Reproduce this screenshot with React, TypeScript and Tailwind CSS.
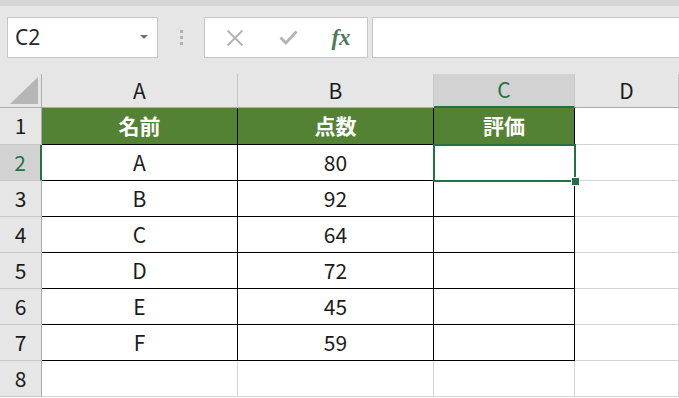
import React from "react";

const cols = ["A", "B", "C", "D"];
const data: string[][] = [
  ["名前", "点数", "評価"],
  ["A", "80", ""],
  ["B", "92", ""],
  ["C", "64", ""],
  ["D", "72", ""],
  ["E", "45", ""],
  ["F", "59", ""],
];

const font = { fontFamily: '"Noto Sans CJK JP", "Noto Sans", sans-serif' };

export default function App() {
  const rows = [1, 2, 3, 4, 5, 6, 7, 8];
  return (
    <div className="w-[679px] h-[398px] overflow-hidden bg-white relative" style={font}>
      {/* top band */}
      <div className="h-[6px] bg-[#d6d6d6]" />
      {/* formula bar */}
      <div className="h-[68px] bg-[#e6e6e6] flex items-start pt-[11px] pl-[7px]">
        <div className="w-[151px] h-[41px] bg-white border border-[#c6c6c6] flex items-center justify-between pl-[7px] pr-[9px]">
          <span className="text-[21px] text-[#1f2a36] leading-none" style={{ fontFamily: '"Noto Sans", sans-serif' }}>C2</span>
          <svg width="8" height="5" viewBox="0 0 8 5">
            <polygon points="0,0 8,0 4,4" fill="#707070" />
          </svg>
        </div>
        <div className="w-[46px] h-[41px] flex flex-col items-center justify-center gap-[3px]">
          <div className="w-[3px] h-[3px] bg-[#b2b2b2]" />
          <div className="w-[3px] h-[3px] bg-[#b2b2b2]" />
          <div className="w-[3px] h-[3px] bg-[#b2b2b2]" />
        </div>
        <div className="w-[164px] h-[41px] bg-white border border-[#c6c6c6] flex items-center">
          <div className="w-[56px] flex justify-center pl-[4px]">
            <svg width="18" height="18" viewBox="0 0 18 18">
              <path d="M1.5 1.5 L16.5 16.5 M16.5 1.5 L1.5 16.5" stroke="#b4b4b4" strokeWidth="2" />
            </svg>
          </div>
          <div className="w-[54px] flex justify-center">
            <svg width="19" height="15" viewBox="0 0 19 15">
              <path d="M1.5 7.5 L6.8 13 L17.5 1.5" stroke="#b4b4b4" strokeWidth="2.8" fill="none" />
            </svg>
          </div>
          <div className="w-[52px] flex justify-center">
            <span
              className="text-[23px] italic font-bold text-[#4d7a5d] leading-none"
              style={{ fontFamily: '"Liberation Serif", serif' }}
            >
              fx
            </span>
          </div>
        </div>
        <div className="ml-[4px] flex-1 h-[41px] bg-white border border-[#c6c6c6] border-r-0" />
      </div>

      {/* grid */}
      <div className="grid grid-cols-[42px_196px_196px_141px_1fr] grid-rows-[34px_37px_36px_36px_36px_36px_36px_36px_36px] relative">
        {/* corner */}
        <div className="bg-[#e6e6e6] border-r border-b border-[#ababab] flex items-end justify-end pr-[3px] pb-[3px]">
          <svg width="28" height="27" viewBox="0 0 28 27">
            <polygon points="28,0 28,27 0,27" fill="#b6b6b6" />
          </svg>
        </div>
        {cols.map((c) => {
          const sel = c === "C";
          return (
            <div
              key={c}
              className={
                sel
                  ? "bg-[#d2d2d2] border-r border-[#c6c6c6] border-b-2 border-b-[#217346] flex items-center justify-center text-[21px] text-[#217346]"
                  : "bg-[#e6e6e6] border-r border-[#c6c6c6] border-b border-b-[#ababab] flex items-center justify-center text-[21px] text-[#1b1b1b]"
              }
            >
              {c}
            </div>
          );
        })}
        {rows.map((r) => {
          const rowSel = r === 2;
          const cells = [0, 1, 2, 3].map((ci) => {
            const inTable = r <= 7 && ci <= 2;
            const header = r === 1 && ci <= 2;
            const text = inTable ? data[r - 1][ci] : "";
            let cls = "flex items-center justify-center border-r border-b ";
            if (header) {
              cls += "bg-[#548235] border-black text-white font-bold text-[21px]";
            } else if (inTable) {
              cls += "bg-white border-black text-[#1b1b1b] text-[21px]";
            } else {
              cls += "bg-white border-[#d4d4d4]";
            }
            return (
              <div key={ci} className={cls}>
                {text}
              </div>
            );
          });
          return (
            <React.Fragment key={r}>
              <div
                className={
                  rowSel
                    ? "bg-[#d2d2d2] border-r-2 border-r-[#217346] border-b border-b-[#c6c6c6] flex items-center justify-center text-[21px] text-[#217346]"
                    : "bg-[#e6e6e6] border-r border-r-[#ababab] border-b border-b-[#c6c6c6] flex items-center justify-center text-[21px] text-[#1b1b1b]"
                }
              >
                {r}
              </div>
              {cells}
            </React.Fragment>
          );
        })}
        {/* selection overlay on C2 */}
        <div className="absolute left-[433px] top-[70px] w-[143px] h-[38px] border-2 border-[#217346] pointer-events-none" />
        <div className="absolute left-[571px] top-[103px] w-[7px] h-[7px] bg-[#217346] border border-white box-content" />
      </div>
    </div>
  );
}
